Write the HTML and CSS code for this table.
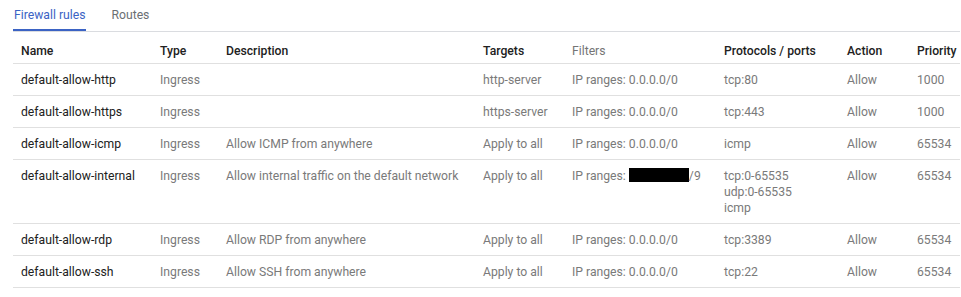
FILE: index.html
```html
<!DOCTYPE html>
<html lang="en">
<head>
    <meta charset="UTF-8">
    <title>Firewall rules</title>
    <link rel="stylesheet" href="styles.css">
</head>
<body>
    <div class="page">
        <div class="tabs">
            <div class="tab active">Firewall rules</div>
            <div class="tab">Routes</div>
        </div>

        <table class="rules">
            <colgroup>
                <col style="width: 139px">
                <col style="width: 66px">
                <col style="width: 257px">
                <col style="width: 89px">
                <col style="width: 152px">
                <col style="width: 123px">
                <col style="width: 70px">
                <col style="width: 51px">
            </colgroup>
            <thead>
                <tr>
                    <th>Name</th>
                    <th>Type</th>
                    <th>Description</th>
                    <th>Targets</th>
                    <th class="muted">Filters</th>
                    <th>Protocols / ports</th>
                    <th>Action</th>
                    <th>Priority</th>
                </tr>
            </thead>
            <tbody>
                <tr>
                    <td class="name">default-allow-http</td>
                    <td>Ingress</td>
                    <td></td>
                    <td>http-server</td>
                    <td>IP ranges: 0.0.0.0/0</td>
                    <td>tcp:80</td>
                    <td>Allow</td>
                    <td>1000</td>
                </tr>
                <tr>
                    <td class="name">default-allow-https</td>
                    <td>Ingress</td>
                    <td></td>
                    <td>https-server</td>
                    <td>IP ranges: 0.0.0.0/0</td>
                    <td>tcp:443</td>
                    <td>Allow</td>
                    <td>1000</td>
                </tr>
                <tr>
                    <td class="name">default-allow-icmp</td>
                    <td>Ingress</td>
                    <td>Allow ICMP from anywhere</td>
                    <td>Apply to all</td>
                    <td>IP ranges: 0.0.0.0/0</td>
                    <td>icmp</td>
                    <td>Allow</td>
                    <td>65534</td>
                </tr>
                <tr>
                    <td class="name">default-allow-internal</td>
                    <td>Ingress</td>
                    <td>Allow internal traffic on the default network</td>
                    <td>Apply to all</td>
                    <td>IP ranges: <span class="redacted"></span>/9</td>
                    <td>tcp:0-65535<br>udp:0-65535<br>icmp</td>
                    <td>Allow</td>
                    <td>65534</td>
                </tr>
                <tr>
                    <td class="name">default-allow-rdp</td>
                    <td>Ingress</td>
                    <td>Allow RDP from anywhere</td>
                    <td>Apply to all</td>
                    <td>IP ranges: 0.0.0.0/0</td>
                    <td>tcp:3389</td>
                    <td>Allow</td>
                    <td>65534</td>
                </tr>
                <tr>
                    <td class="name">default-allow-ssh</td>
                    <td>Ingress</td>
                    <td>Allow SSH from anywhere</td>
                    <td>Apply to all</td>
                    <td>IP ranges: 0.0.0.0/0</td>
                    <td>tcp:22</td>
                    <td>Allow</td>
                    <td>65534</td>
                </tr>
            </tbody>
        </table>
    </div>
</body>
</html>
```

FILE: styles.css
```css
* {
    box-sizing: border-box;
    margin: 0;
    padding: 0;
}

body {
    font-family: Roboto, "Liberation Sans", Arial, sans-serif;
    font-size: 12.2px;
    color: #212121;
    background-color: #fff;
}

.page {
    padding-left: 13px;
    width: 960px;
}

.tabs {
    display: flex;
    gap: 24px;
    border-bottom: 1px solid #dadce0;
    height: 32px;
}

.tab {
    padding: 7px 1px 0;
    color: #6b6f73;
    line-height: 16px;
}

.tab.active {
    color: #3b63c4;
    border-bottom: 2px solid #3b63c4;
    height: 31px;
    margin-bottom: -1px;
}

.rules {
    width: 947px;
    table-layout: fixed;
    border-collapse: collapse;
}

.rules th,
.rules td {
    text-align: left;
    vertical-align: top;
    padding: 8px 8px 7px;
    line-height: 16px;
    border-bottom: 1px solid #e0e0e0;
    white-space: nowrap;
}

.rules th {
    font-weight: 500;
    color: #212121;
    padding-top: 11px;
    padding-bottom: 4px;
    height: 31px;
}

.rules th.muted {
    font-weight: 400;
    color: #757575;
}

.rules td {
    color: #7a7a7a;
}

.rules td.name {
    color: #212121;
}

.redacted {
    display: inline-block;
    width: 60px;
    height: 14px;
    background-color: #000;
    vertical-align: -2px;
}
```
